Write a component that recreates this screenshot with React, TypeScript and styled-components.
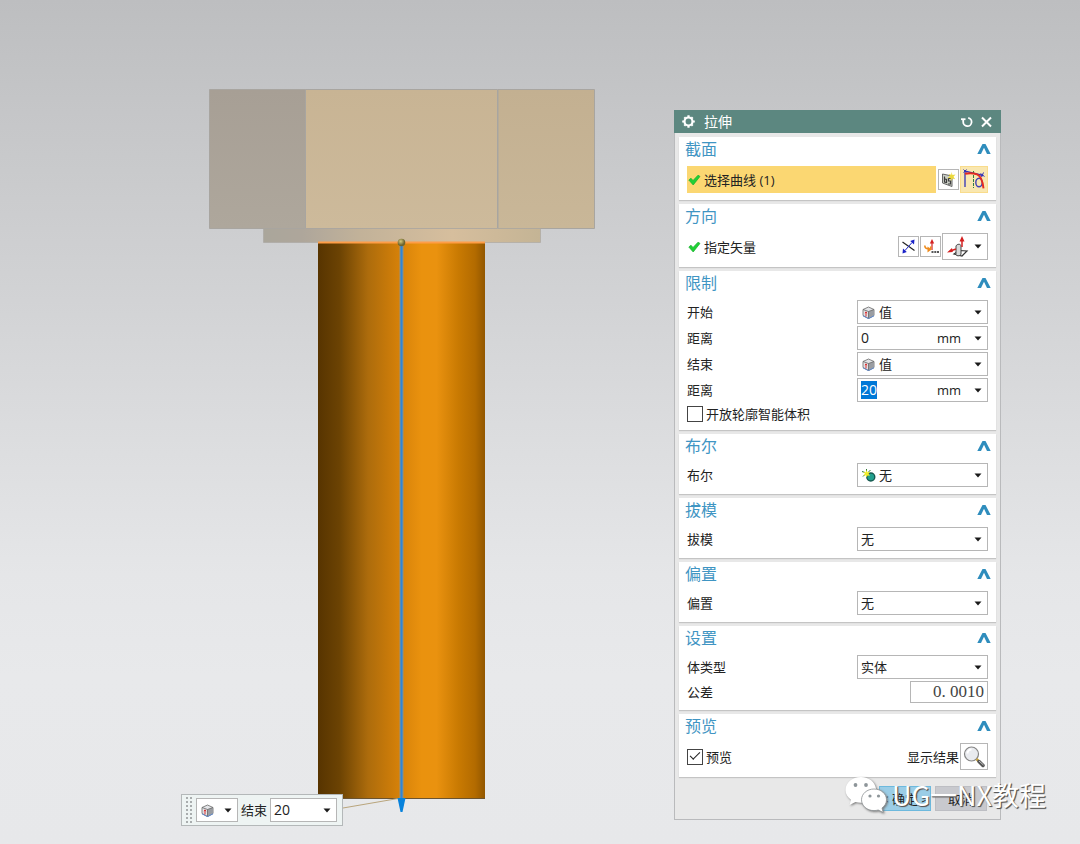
import React, { useEffect, useRef } from 'react';
import styled, { createGlobalStyle } from 'styled-components';

const GlobalStyle = createGlobalStyle`
  *, *::before, *::after { box-sizing: border-box; }
  body {
    margin: 0;
    color: #222;
    font: 13px/18px "Open Sans", "Noto Sans CJK SC", sans-serif;
  }
  button, input, select { font: inherit; color: inherit; }
`;

const Viewport = styled.main`
  position: relative;
  min-height: 100vh;
  overflow: hidden;
  background: linear-gradient(#bdbec0 0%, #c6c7c9 15%, #d1d2d4 34%, #dcdddf 52%, #e5e6e8 68%, #e8e9eb 80%, #e7e8ea 100%);
`;

const Model = styled.svg`
  position: absolute;
  left: 200px;
  top: 80px;
`;

const MiniBar = styled.form`
  position: absolute;
  left: 181px;
  top: 794px;
  display: flex;
  align-items: center;
  gap: 3px;
  padding: 2px 5px 2px 4px;
  border: 1px solid #b4b8b9;
  background: #eef4f3;
`;

const Grip = styled.span`
  width: 7px;
  height: 26px;
  background: radial-gradient(circle at 1px 1px, #a9adae 1px, transparent 1px) 0 0 / 4px 4px;
`;

const MiniLabel = styled.label`
  font-size: 13px;
`;

const Dialog = styled.section`
  position: absolute;
  left: 674px;
  top: 110px;
  width: 327px;
  border: 1px solid #b9babc;
  border-top: 0;
  background: #e8e8e8;
`;

const TitleBar = styled.header`
  display: flex;
  align-items: center;
  height: 23px;
  margin: 0 -1px;
  padding: 0 8px;
  color: #fff;
  background: #5c8780;
`;

const DialogTitle = styled.h1`
  flex: 1;
  margin: 0 0 0 9px;
  font-size: 14px;
  font-weight: 400;
`;

const TitleButton = styled.button`
  display: flex;
  margin-left: 7px;
  padding: 0;
  border: 0;
  background: none;
`;

const Groups = styled.div`
  display: grid;
  gap: 4px;
  padding: 4px 4px 0;
`;

const Group = styled.section`
  padding: 0 8px 7px;
  background: #fff;
  box-shadow: 0 1px 1px #c4c4c4;
`;

const GroupHead = styled.header`
  display: flex;
  align-items: center;
  justify-content: space-between;
  height: 24px;
  margin: 0 -3px 5px -2px;
`;

const GroupTitle = styled.h2`
  margin: 0;
  color: #3f95c3;
  font-size: 16px;
  line-height: 24px;
  font-weight: 400;
`;

const Toggle = styled.button`
  display: flex;
  padding: 0;
  border: 0;
  background: none;
`;

const Rows = styled.div`
  display: grid;
  gap: 2px;
`;

const Row = styled.div<{ $height?: number }>`
  display: flex;
  align-items: center;
  gap: 1px;
  min-height: ${p => p.$height ?? 24}px;
`;

const RowLabel = styled.label`
  flex: 1;
`;

const Picker = styled.div<{ $active?: boolean }>`
  display: flex;
  flex: 1;
  align-items: center;
  gap: 3px;
  height: 27px;
  margin-right: 1px;
  padding-left: 1px;
  background: ${p => (p.$active ? '#fbd772' : 'transparent')};
`;

const IconButton = styled.button<{ $size: number; $width?: number; $lit?: boolean }>`
  display: flex;
  align-items: center;
  justify-content: center;
  flex: none;
  width: ${p => p.$width ?? p.$size}px;
  height: ${p => p.$size}px;
  padding: 0;
  border: 1px solid ${p => (p.$lit ? '#f9dc8c' : '#b6b6b6')};
  background: ${p => (p.$lit ? '#f9e7b0' : '#fff')};
`;

const Field = styled.div<{ $width?: number; $height?: number }>`
  position: relative;
  display: flex;
  align-items: center;
  flex: none;
  width: ${p => p.$width ?? 131}px;
  height: ${p => p.$height ?? 24}px;
  border: 1px solid #b6b6b6;
  background: #fff;
`;

const SelectBox = styled.select<{ $icon?: boolean; $numeric?: boolean }>`
  appearance: none;
  width: 100%;
  height: 100%;
  padding: 0 18px 0 ${p => (p.$icon ? 21 : 3)}px;
  border: 0;
  outline: 0;
  background: transparent;
  font-size: ${p => (p.$numeric ? 14 : 13)}px;
`;

const FieldIcon = styled.span`
  position: absolute;
  left: 4px;
  display: flex;
  pointer-events: none;
`;

const FieldArrow = styled.span`
  position: absolute;
  right: 5px;
  display: flex;
  pointer-events: none;
`;

const TextBox = styled.input`
  flex: 1;
  min-width: 0;
  height: 18px;
  padding: 0 0 0 3px;
  border: 0;
  outline: 0;
  background: transparent;
  font-size: 14px;
  line-height: 18px;
  &::selection { color: #fff; background: #0078d7; }
`;

const ToleranceBox = styled.input`
  width: 78px;
  height: 22px;
  padding: 0 3px;
  border: 1px solid #b6b6b6;
  color: #444;
  background: #fff;
  font: 17px/20px "Liberation Serif", serif;
  text-align: right;
`;

const Unit = styled.span`
  margin-right: 8px;
`;

const UnitButton = styled.button`
  display: flex;
  align-items: center;
  justify-content: center;
  width: 18px;
  height: 100%;
  padding: 0;
  border: 0;
  background: none;
`;

const CheckLabel = styled.label`
  display: flex;
  align-items: center;
  gap: 3px;
  flex: 1;
`;

const CheckBox = styled.input`
  appearance: none;
  display: grid;
  place-items: center;
  width: 16px;
  height: 16px;
  margin: 0;
  border: 1px solid #444;
  background: #fff;
  &:checked::before {
    content: "";
    width: 10px;
    height: 5px;
    margin-bottom: 4px;
    border: solid #222;
    border-width: 0 0 1px 1px;
    transform: rotate(-45deg);
  }
`;

const Footer = styled.footer`
  display: flex;
  justify-content: flex-end;
  gap: 4px;
  padding: 9px 13px 8px;
`;

const FooterButton = styled.button<{ $primary?: boolean }>`
  width: 52px;
  height: 25px;
  padding: 0;
  border: 1px solid ${p => (p.$primary ? '#6db9dd' : '#bdbec3')};
  background: ${p => (p.$primary ? '#9bcde6' : '#c8c9ce')};
  white-space: nowrap;
`;

const Watermark = styled.div`
  position: absolute;
  left: 844px;
  top: 774px;
  display: flex;
  align-items: center;
  gap: 4px;
  color: #fff;
  font: 400 27px/42px "Noto Sans CJK SC", sans-serif;
  text-shadow: 1px 1px 1px #555, 1px 1px 0 #888;
  white-space: nowrap;
  pointer-events: none;
  svg { filter: drop-shadow(1px 1px 1px #777); }
`;

const Arrow = () => (
  <svg width="8" height="5" viewBox="0 0 8 5"><path d="M.5 .5h7L4 4.500z" fill="#1a1a1a" /></svg>
);

const Chevron = () => (
  <svg width="14" height="12" viewBox="0 0 14 12">
    <path d="M.3 11 5.500 1h3l5.200 10h-3.700L7 4.800 4 11z" fill="#2f8dbd" />
  </svg>
);

const Gear = () => (
  <svg width="13" height="13" viewBox="0 0 13 13" fill="none" stroke="#fff">
    <circle cx="6.500" cy="6.500" r="4" strokeWidth="2.200" />
    <path d="M6.500 .2v2M6.500 10.800v2M.2 6.500h2M10.800 6.500h2M2.300 2.300l1 1M9.700 9.700l1 1M2.300 10.700l1-1M9.700 3.300l1-1" strokeWidth="2.200" />
  </svg>
);

const Tick = () => (
  <svg width="13" height="12" viewBox="0 0 13 12">
    <path d="M.8 6 3 4.200l2 2.300L10 1.200l2 1.200L5.200 11z" fill="#1fd035" stroke="#18b02c" strokeWidth=".7" />
  </svg>
);

const Cube = () => (
  <svg width="13" height="13" viewBox="0 0 13 13">
    <path d="M1 3.500 6.500 1 12 3.500v6L6.500 12.500 1 9.500z" fill="#e3e5e8" stroke="#777" strokeWidth=".9" />
    <path d="M6.500 5.600 12 3.500v6l-5.500 3z" fill="#9a9da2" />
    <path d="M1 3.500l5.500 2 5.500-2M6.500 5.500v7" fill="none" stroke="#666" strokeWidth=".8" />
    <path d="M1 9.800l5.500 2.900L12 9.800" fill="none" stroke="#5d87c9" strokeWidth="1" />
    <path d="M4 6v4.500M3.200 7.200 4 5.800l.8 1.400" fill="none" stroke="#d93030" strokeWidth="1" />
  </svg>
);

const BooleanNone = () => (
  <svg width="14" height="13" viewBox="0 0 14 13">
    <circle cx="8.800" cy="8" r="4" fill="#22a08d" stroke="#17594f" strokeWidth="1.400" />
    <path d="M4.500 0v3M0 2.500l3 1M1 7.500 3 5.500M8.500 1 6.500 3" stroke="#2f7a35" strokeWidth="1" />
    <path d="M4.500 1l1 2.300 2.500-.5-1.500 2 1.500 2-2.500-.4-1 2.200-.8-2.300-2.500.3L3 4.700 1.200 2.900l2.500.4z" fill="#f3ee2a" />
  </svg>
);

const SketchIcon = () => (
  <svg width="15" height="15" viewBox="0 0 15 15">
    <path d="M1.500 2 11 4v10.500L1.500 11z" fill="#cdd1c8" stroke="#666" />
    <path d="M3.500 4.500v5.500l2 .5V7.500L4 7M10 6.500H7.500V9h2v3H7" fill="none" stroke="#3d3d3d" strokeWidth="1.200" />
    <path d="M10.500 0l1 3 3-.6-2 2.300 1.700 2.500-3-.7-1.200 2.500-.6-3-3 .2 2.500-1.900L7.800 2l2.500.8z" fill="#ecd93c" />
  </svg>
);

const CurveIcon = () => (
  <svg width="24" height="23" viewBox="0 0 24 23" fill="none">
    <path d="M3 19V3l18 4.500" stroke="#3232b8" strokeWidth="1.300" />
    <path d="M1.500 1.500l3 3m0-3-3 3M18.500 5.500l4 3m-1-4-2 4.500" stroke="#3232b8" />
    <path d="M11.500 3v17" stroke="#317a45" strokeDasharray="3 1" />
    <ellipse cx="17" cy="14.500" rx="3.200" ry="4.300" stroke="#4040b5" strokeWidth="1.400" />
    <path d="M3 5.800c4-.8 9-.5 12 .6s5.500 5 6.500 14" stroke="#e52a20" strokeWidth="1.900" />
  </svg>
);

const ReverseIcon = () => (
  <svg width="15" height="15" viewBox="0 0 15 15" fill="none">
    <path d="M1.500 3 13.500 11.500" stroke="#222" strokeWidth="1.200" />
    <path d="M4 11.500 11 3.500" stroke="#1a22c8" strokeWidth="1" />
    <path d="M13.500 .5 13 5.500 9.200 2zM1.500 14.500l.5-5 3.800 3.500z" fill="#1a22c8" />
  </svg>
);

const VectorDialogIcon = () => (
  <svg width="16" height="15" viewBox="0 0 16 15" fill="none">
    <path d="M9 11V3" stroke="#d42020" strokeWidth="1.200" />
    <path d="M9 0l2.200 4.500H6.800z" fill="#d42020" />
    <path d="M1.800 6.500c0 2.500 1 3.300 3.500 3.300M8 7.500l-1 3.500" stroke="#ee8b1c" strokeWidth="1.600" />
    <path d="M4.500 7.500 8.500 10.500 4.500 13.500z" fill="#ee8b1c" />
    <path d="M8.500 13h2M11.300 13h2M14 13h2" stroke="#222" strokeWidth="1.600" />
  </svg>
);

const FaceNormalIcon = () => (
  <svg width="22" height="22" viewBox="0 0 22 22" fill="none">
    <path d="M7 18l5-3.500 8 .5-5 5z" stroke="#333" strokeWidth="1.200" />
    <path d="M9 10c1-2.300 5-2.300 5 0v8.500c-1 1.800-5 1.800-5 0z" fill="#d8dada" stroke="#444" />
    <path d="M15 11V4M9 13 4 14.800" stroke="#d42020" strokeWidth="1.500" />
    <path d="M15 0l2.500 5.500h-5zM0 16.500l5-4.500.8 4z" fill="#d42020" />
  </svg>
);

const MagnifierIcon = () => (
  <svg width="24" height="24" viewBox="0 0 24 24">
    <circle cx="9.500" cy="9" r="7" fill="#e9ebef" stroke="#858585" strokeWidth="1.200" />
    <path d="M5.500 8.500c0-2.500 2-4 4-4" fill="none" stroke="#fff" strokeWidth="2" />
    <path d="M14.500 14l2.500 2.500" stroke="#c6a23d" strokeWidth="2.500" />
    <path d="M17 16.500l4 4" stroke="#555" strokeWidth="3.500" strokeLinecap="round" />
    <path d="M17 16l4.500 4" stroke="#c4c4c4" strokeWidth="1" />
  </svg>
);

const WeChatIcon = () => (
  <svg width="44" height="40" viewBox="0 0 44 40" fill="#fff">
    <path d="M17 2C8 2 1.500 7.800 1.500 15c0 4 2.200 7.500 5.500 9.800L5.500 30l6-3c2 .6 4 .9 6 .8h2C31 28 32 15 32 13.500 31 7 25 2 17 2z" />
    <path d="M30 14c7 0 12.500 4.800 12.500 10.800 0 3.400-1.800 6.200-4.500 8.200l1.200 4.500-5-2.500c-1.300.4-2.700.6-4.200.6-7 0-12.500-4.800-12.500-10.800S23 14 30 14z" stroke="#8b9093" strokeWidth=".8" />
    <g fill="#8d9599">
      <circle cx="11.500" cy="10" r="1.900" /><circle cx="22" cy="10" r="1.900" />
      <circle cx="26" cy="21" r="1.600" /><circle cx="34.500" cy="21" r="1.600" />
    </g>
  </svg>
);

function Section({ title, children }: { title: string; children: React.ReactNode }) {
  return (
    <Group>
      <GroupHead>
        <GroupTitle>{title}</GroupTitle>
        <Toggle type="button" aria-label={`折叠${title}`}><Chevron /></Toggle>
      </GroupHead>
      <Rows>{children}</Rows>
    </Group>
  );
}

function SelectRow({ id, label, value, icon }: { id: string; label: string; value: string; icon?: React.ReactNode }) {
  return (
    <Row>
      <RowLabel htmlFor={id}>{label}</RowLabel>
      <Field>
        {icon && <FieldIcon>{icon}</FieldIcon>}
        <SelectBox id={id} $icon={!!icon}><option>{value}</option></SelectBox>
        <FieldArrow><Arrow /></FieldArrow>
      </Field>
    </Row>
  );
}

function DistanceRow({ id, value, selected }: { id: string; value: string; selected?: boolean }) {
  const box = useRef<HTMLInputElement>(null);
  useEffect(() => {
    if (selected) {
      box.current?.focus();
      box.current?.select();
    }
  }, [selected]);
  return (
    <Row>
      <RowLabel htmlFor={id}>距离</RowLabel>
      <Field>
        <TextBox id={id} ref={box} defaultValue={value} />
        <Unit>mm</Unit>
        <UnitButton type="button" aria-label="距离选项"><Arrow /></UnitButton>
      </Field>
    </Row>
  );
}

function Bolt() {
  return (
    <Model width="400" height="740" viewBox="0 0 400 740">
      <defs>
        <linearGradient id="shank">
          <stop offset="0" stopColor="#573400" />
          <stop offset=".13" stopColor="#6c4303" />
          <stop offset=".3" stopColor="#ad6c0c" />
          <stop offset=".48" stopColor="#d48009" />
          <stop offset=".62" stopColor="#ea920e" />
          <stop offset=".71" stopColor="#ea920f" />
          <stop offset=".84" stopColor="#c97a02" />
          <stop offset=".94" stopColor="#b36b00" />
          <stop offset="1" stopColor="#925700" />
        </linearGradient>
        <linearGradient id="washer">
          <stop offset="0" stopColor="#aaa69b" />
          <stop offset=".14" stopColor="#aea69b" />
          <stop offset=".35" stopColor="#c2b299" />
          <stop offset=".68" stopColor="#d6be9d" />
          <stop offset="1" stopColor="#c4b495" />
        </linearGradient>
        <linearGradient id="dark" x2="0" y2="1">
          <stop stopColor="#a79f95" /><stop offset="1" stopColor="#aea79c" />
        </linearGradient>
        <linearGradient id="light" x2="0" y2="1">
          <stop stopColor="#c8b494" /><stop offset="1" stopColor="#cdba9b" />
        </linearGradient>
        <linearGradient id="side" x2="0" y2="1">
          <stop stopColor="#c3b091" /><stop offset="1" stopColor="#c9b798" />
        </linearGradient>
        <radialGradient id="ball" cx=".4" cy=".35">
          <stop stopColor="#d5c97b" /><stop offset="1" stopColor="#6d6530" />
        </radialGradient>
      </defs>
      <g stroke="#a8a5a0">
        <path d="M9.500 9.500h96v139h-96z" fill="url(#dark)" />
        <path d="M105.500 9.500h192v139h-192z" fill="url(#light)" />
        <path d="M298 9.500h96.500v139H298z" fill="url(#side)" />
        <path d="M63.500 148.500h277v14h-277z" fill="url(#washer)" strokeOpacity=".6" />
      </g>
      <path d="M118 162h167v556H118z" fill="url(#shank)" />
      <path d="M118 718.500h167" stroke="#6b5431" />
      <path d="M118 162.500h167" stroke="#ff9d47" strokeWidth="2" />
      <path d="M143 728l58-10" stroke="#b9a57c" />
      <path d="M201.500 163v556" stroke="#8f9185" strokeWidth="4" />
      <path d="M201.500 163v556" stroke="#2f86d6" strokeWidth="2" />
      <path d="M197.500 718h8l-3 14h-2z" fill="#0782dc" />
      <circle cx="201.500" cy="162.500" r="3.800" fill="url(#ball)" />
    </Model>
  );
}

export default function App() {
  return (
    <Viewport>
      <GlobalStyle />
      <Bolt />

      <MiniBar>
        <Grip />
        <Field $width={42}>
          <FieldIcon><Cube /></FieldIcon>
          <SelectBox aria-label="结束类型" $icon><option> </option></SelectBox>
          <FieldArrow><Arrow /></FieldArrow>
        </Field>
        <MiniLabel htmlFor="mini-end">结束</MiniLabel>
        <Field $width={67}>
          <SelectBox id="mini-end" $numeric><option>20</option></SelectBox>
          <FieldArrow><Arrow /></FieldArrow>
        </Field>
      </MiniBar>

      <Dialog aria-label="拉伸">
        <TitleBar>
          <Gear />
          <DialogTitle>拉伸</DialogTitle>
          <TitleButton type="button" aria-label="重置">
            <svg width="13" height="13" viewBox="0 0 13 13" fill="none" stroke="#fff" strokeWidth="1.800">
              <path d="M3.200 4v2.800a4.200 4.200 0 1 0 5-4" /><path d="M1 4.200h4.500" />
            </svg>
          </TitleButton>
          <TitleButton type="button" aria-label="关闭">
            <svg width="13" height="13" viewBox="0 0 13 13" stroke="#fff" strokeWidth="2">
              <path d="M2 2.500l9 9M11 2.500l-9 9" />
            </svg>
          </TitleButton>
        </TitleBar>

        <Groups>
          <Section title="截面">
            <Row $height={27}>
              <Picker $active><Tick />选择曲线 (1)</Picker>
              <IconButton type="button" aria-label="绘制截面" $size={21}><SketchIcon /></IconButton>
              <IconButton type="button" aria-label="曲线" $size={27} $width={28} $lit><CurveIcon /></IconButton>
            </Row>
          </Section>

          <Section title="方向">
            <Row $height={27}>
              <Picker><Tick />指定矢量</Picker>
              <IconButton type="button" aria-label="反向" $size={21}><ReverseIcon /></IconButton>
              <IconButton type="button" aria-label="矢量对话框" $size={21}><VectorDialogIcon /></IconButton>
              <Field as="button" type="button" aria-label="自动判断的矢量" $width={46} $height={27}>
                <FieldIcon><FaceNormalIcon /></FieldIcon>
                <FieldArrow><Arrow /></FieldArrow>
              </Field>
            </Row>
          </Section>

          <Section title="限制">
            <SelectRow id="start" label="开始" value="值" icon={<Cube />} />
            <DistanceRow id="start-distance" value="0" />
            <SelectRow id="end" label="结束" value="值" icon={<Cube />} />
            <DistanceRow id="end-distance" value="20" selected />
            <Row $height={19}>
              <CheckLabel><CheckBox type="checkbox" />开放轮廓智能体积</CheckLabel>
            </Row>
          </Section>

          <Section title="布尔">
            <SelectRow id="boolean" label="布尔" value="无" icon={<BooleanNone />} />
          </Section>

          <Section title="拔模">
            <SelectRow id="draft" label="拔模" value="无" />
          </Section>

          <Section title="偏置">
            <SelectRow id="offset" label="偏置" value="无" />
          </Section>

          <Section title="设置">
            <SelectRow id="body" label="体类型" value="实体" />
            <Row $height={22}>
              <RowLabel htmlFor="tolerance">公差</RowLabel>
              <ToleranceBox id="tolerance" defaultValue="0. 0010" />
            </Row>
          </Section>

          <Section title="预览">
            <Row $height={27}>
              <CheckLabel><CheckBox type="checkbox" defaultChecked />预览</CheckLabel>
              <label htmlFor="show-result">显示结果</label>
              <IconButton id="show-result" type="button" $size={27} $width={28}><MagnifierIcon /></IconButton>
            </Row>
          </Section>
        </Groups>

        <Footer>
          <FooterButton type="button" $primary>&lt; 确定 &gt;</FooterButton>
          <FooterButton type="button">取消</FooterButton>
        </Footer>
      </Dialog>

      <Watermark><WeChatIcon />UG一NX教程</Watermark>
    </Viewport>
  );
}
